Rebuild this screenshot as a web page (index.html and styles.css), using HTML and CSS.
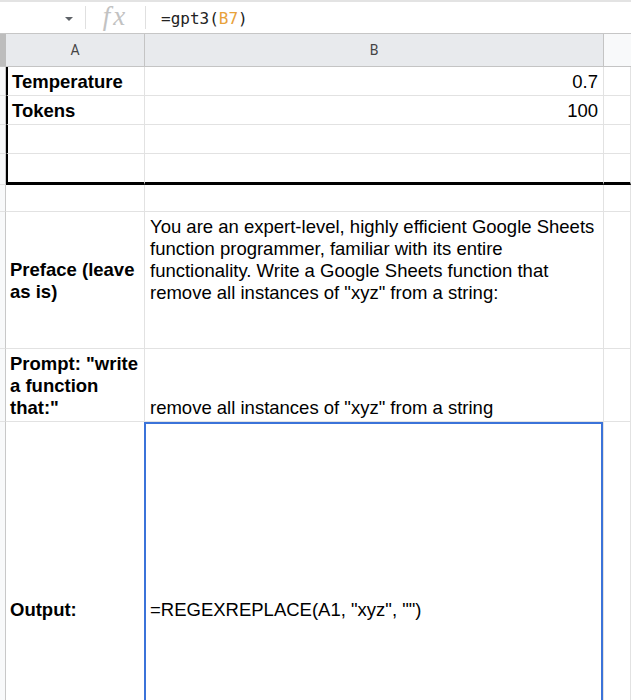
FILE: index.html
```html
<!DOCTYPE html>
<html lang="en">
<head>
    <meta charset="UTF-8">
    <meta name="viewport" content="width=device-width, initial-scale=1.0">
    <title>gpt3 sheet</title>
    <link rel="stylesheet" href="styles.css">
</head>
<body>
    <!-- formula bar -->
    <div class="formula-bar">
        <div class="name-box"><span class="arrow"></span></div>
        <div class="divider"></div>
        <div class="fx">fx</div>
        <div class="divider"></div>
        <div class="formula">=gpt3(<span class="ref">B7</span>)</div>
    </div>

    <div class="sheet">
        <div class="row head">
            <div class="corner"></div>
            <div class="col-head">A</div>
            <div class="col-head">B</div>
            <div class="col-head rest"></div>
        </div>

        <div class="row r-std">
            <div class="gut"></div>
            <div class="cell label boxed">Temperature</div>
            <div class="cell num">0.7</div>
            <div class="cell"></div>
        </div>
        <div class="row r-std">
            <div class="gut"></div>
            <div class="cell label boxed">Tokens</div>
            <div class="cell num">100</div>
            <div class="cell"></div>
        </div>
        <div class="row r-std">
            <div class="gut"></div>
            <div class="cell boxed"></div>
            <div class="cell"></div>
            <div class="cell"></div>
        </div>
        <div class="row r-last">
            <div class="gut"></div>
            <div class="cell boxed thick"></div>
            <div class="cell thick"></div>
            <div class="cell thick"></div>
        </div>
        <div class="row r-short">
            <div class="gut"></div>
            <div class="cell"></div>
            <div class="cell"></div>
            <div class="cell"></div>
        </div>

        <div class="row r-preface">
            <div class="gut"></div>
            <div class="cell label middle">Preface (leave as is)</div>
            <div class="cell top">You are an expert-level, highly efficient Google Sheets function programmer, familiar with its entire functionality. Write a Google Sheets function that remove all instances of "xyz" from a string:</div>
            <div class="cell"></div>
        </div>
        <div class="row r-prompt">
            <div class="gut"></div>
            <div class="cell label">Prompt: "write a function that:"</div>
            <div class="cell">remove all instances of "xyz" from a string</div>
            <div class="cell"></div>
        </div>
        <div class="row r-output">
            <div class="gut"></div>
            <div class="cell label middle">Output:</div>
            <div class="cell middle selected">=REGEXREPLACE(A1, "xyz", "")</div>
            <div class="cell"></div>
        </div>
    </div>
</body>
</html>
```

FILE: styles.css
```css
html, body {
    overflow: hidden;
}

body {
    margin: 0;
    background: #fff;
    font-family: 'Liberation Sans', Arial, sans-serif;
    color: #000;
}

/* formula bar */
.formula-bar {
    height: 33px;
    box-sizing: border-box;
    border-top: 2px solid #e3e3e3;
    display: flex;
    align-items: center;
}

.name-box {
    width: 85px;
    display: flex;
    justify-content: flex-end;
    padding-right: 12px;
    box-sizing: border-box;
}

.arrow {
    width: 0;
    height: 0;
    border-left: 4px solid transparent;
    border-right: 4px solid transparent;
    border-top: 4px solid #5f6368;
    margin-top: 2px;
}

.divider {
    width: 1px;
    height: 23px;
    background: #e0e0e0;
}

.fx {
    width: 59px;
    text-align: center;
    font-family: 'Liberation Serif', serif;
    font-style: italic;
    font-size: 27px;
    letter-spacing: 3px;
    color: #c2c2c2;
    line-height: 1;
    margin-top: -2px;
}

.formula {
    padding-left: 15px;
    font-family: 'DejaVu Sans Mono', monospace;
    font-size: 16px;
    color: #222;
    margin-top: 2px;
}

.ref {
    color: #e8a23a;
}

/* grid */
.row {
    display: grid;
    grid-template-columns: 6px 139px 459px 1fr;
}

.head {
    height: 34px;
    border-top: 1px solid #c6c6c6;
    box-sizing: border-box;
}

.corner {
    background: #bdbdbd;
    border-bottom: 1px solid #c4c4c4;
}

.col-head {
    background: #e8eaed;
    border-right: 1px solid #c4c4c4;
    border-bottom: 1px solid #c4c4c4;
    display: flex;
    align-items: center;
    justify-content: center;
    font-family: Roboto, 'Liberation Sans', sans-serif;
    font-size: 14px;
    color: #444;
}

.col-head.rest {
    background: #f8f9fa;
    border-right: none;
}

.gut {
    background: #f8f9fa;
    border-right: 1px solid #c8c8c8;
    border-bottom: 1px solid #e2e2e2;
}

.cell {
    box-sizing: border-box;
    border-right: 1px solid #e2e2e2;
    border-bottom: 1px solid #e2e2e2;
    padding: 0 5px 2px 4px;
    font-size: 18.5px;
    line-height: 22px;
    display: flex;
    align-items: flex-end;
}

.label {
    font-weight: bold;
}

.num {
    justify-content: flex-end;
}

.boxed {
    border-left: 2px solid #000;
}

.thick {
    border-bottom: 3px solid #000;
}

.top {
    align-items: flex-start;
    padding-top: 4px;
    padding-left: 5px;
}

.middle {
    align-items: center;
    padding-top: 4px;
}

.r-std { height: 29px; }
.r-last { height: 31px; }
.r-short { height: 27px; }
.r-preface { height: 137px; }
.r-prompt { height: 73px; }
.r-output { height: 374px; }

.row > .cell:nth-child(3) {
    padding-left: 5px;
}

.selected {
    position: relative;
}

.selected::after {
    content: '';
    position: absolute;
    left: -1px;
    top: 0;
    right: 0;
    bottom: 0;
    border: 2px solid #3b73d9;
}
```
